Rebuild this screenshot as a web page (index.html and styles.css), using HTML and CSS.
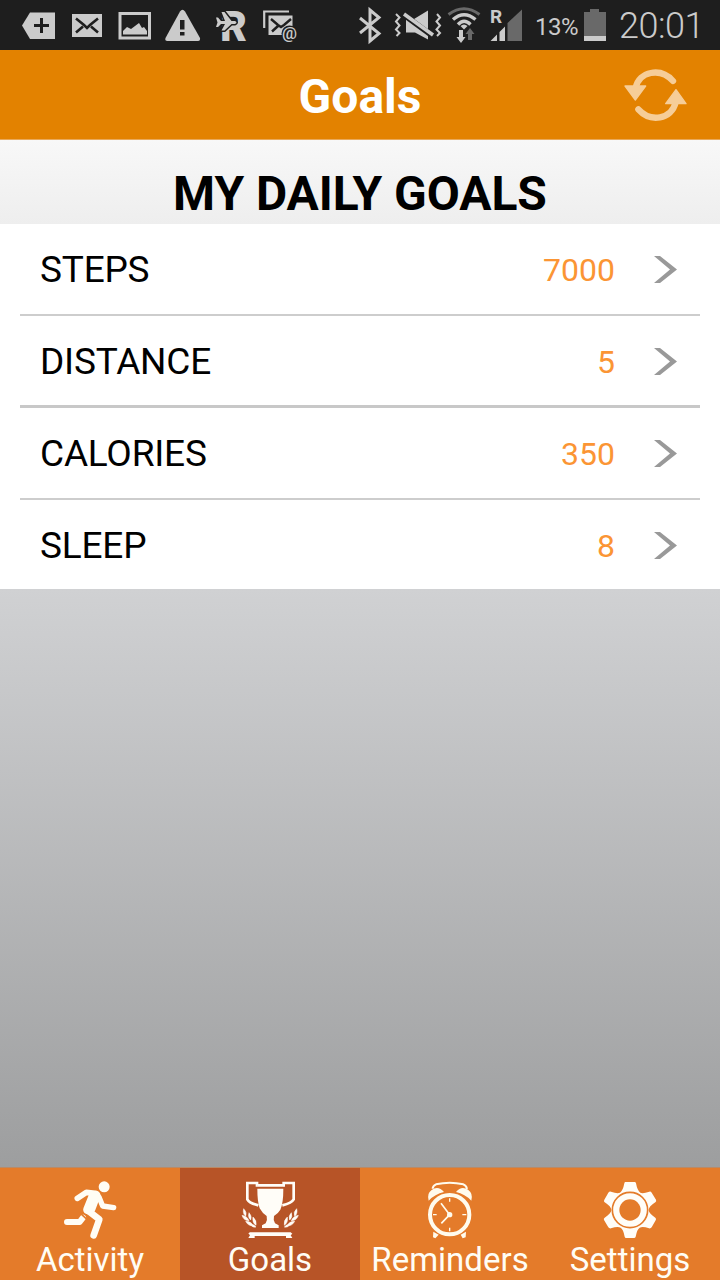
FILE: index.html
```html
<!DOCTYPE html>
<html lang="en">
<head>
<meta charset="utf-8">
<title>Goals</title>
<link rel="stylesheet" href="styles.css">
</head>
<body>
<div class="app">
  <div class="status">
    <svg class="notices" width="290" height="50" viewBox="15 0 290 50">
      <g fill="#cbcbcb">
        <path d="M22 25.500 30 12.500H55V39H30Z"/>
        <path d="M72 14h30v23H72Z"/>
        <path d="M118.500 12H151v27.500H118.500ZM121.500 15v21.500H148V15Z" fill-rule="evenodd"/>
        <path d="M123 34.500V31l4-4 4 2 8-6 3 5 2-1 3 4v3.500Z"/>
        <path d="M180 11.500Q182.500 8 185 11.500L200 38Q200.500 41 198 41H167.500Q164.500 41 165.500 38Z"/>
      </g>
      <path d="M41.500 18v15M34 25.500h15" stroke="#1e1e1e" stroke-width="3" fill="none"/>
      <path d="M76 18.500 84 25l3 3 3-3 8-6.500M76 32.500l7-6M98 32.500l-7-6" stroke="#1e1e1e" stroke-width="2.600" fill="none"/>
      <path d="M180 20h4.500v9.500H180ZM180 32h4.500v3.500H180Z" fill="#1e1e1e"/>
      <text class="roam-letter" x="220" y="41" textLength="27" lengthAdjust="spacingAndGlyphs">R</text>
      <path class="plane" d="M216 17.500h2l3 3.500h4l-3.500-9h3l7 9h3.500q3 1.500 0 3h-3.500l-7 6.500h-3l3.500-6.500h-4l-3 3h-2l1.500-4.500Z"/>
      <path d="M264.200 28V11.500H289" stroke="#cbcbcb" stroke-width="2.200" fill="none"/>
      <path d="M268.500 15.500H292.500V27L284 35H268.500Z" fill="#cbcbcb"/>
      <path d="M271 19l7 6 3 2 3-2 7-6M272 31.500l6-5.500" stroke="#1e1e1e" stroke-width="2.400" fill="none"/>
      <circle cx="289.500" cy="33.500" r="8" fill="#1e1e1e"/>
      <text class="at-letter" x="282" y="38.500" textLength="15" lengthAdjust="spacingAndGlyphs">@</text>
    </svg>
    <svg class="signals" width="172" height="50" viewBox="355 0 172 50">
      <path d="M360 18l19 15.500-9 7.500V10l9 7.500L360 33" stroke="#cbcbcb" stroke-width="3" fill="none"/>
      <path d="M396 14l3.500 3.500-3.500 4 3.500 4-3.500 4 3.500 3.500-3 3M437 14l3 3.500-3.500 4 3.500 4-3.500 4 3.500 3.500-3 3" stroke="#cbcbcb" stroke-width="2" fill="none"/>
      <path d="M406 19h8l14-8.500V39.500l-13-7h-9Z" fill="#cbcbcb"/>
      <path d="M402 13.500 434 37" stroke="#1e1e1e" stroke-width="5.500"/>
      <path d="M404 14 433 35" stroke="#cbcbcb" stroke-width="3.600"/>
      <g fill="none" stroke-width="3">
        <path d="M448.500 14.500Q464 3 479.500 14.500" stroke="#696969"/>
        <path d="M453 19.500Q464 10 475.500 19.500M458 24.500Q464 18 470.500 24.500" stroke="#cbcbcb" stroke-width="3.400"/>
      </g>
      <path d="M460.500 26q3.500-3 7 0L464 29.500Z" fill="#cbcbcb"/>
      <path d="M459 30h4v7h2.500L461 43l-4.500-6h2.500Z" fill="#cbcbcb"/>
      <path d="M468 40v-6h-2.500L470 28l4.500 6H472v6Z" fill="#696969"/>
      <path d="M507.500 41V23L522 9.500V41Z" fill="#696969"/>
      <path d="M490.500 41 497 34.500V41ZM499.500 41v-9l5.500-5.500V41Z" fill="#cbcbcb"/>
      <text class="signal-letter" x="490" y="23">R</text>
    </svg>
    <span class="percent">13%</span>
    <svg class="battery" width="22" height="32" viewBox="0 0 22 32">
      <path d="M0 3H6V0H15V3H22V27H0Z" fill="#696969"/><path d="M0 27H22V32H0Z" fill="#cbcbcb"/>
    </svg>
    <span class="clock">20:01</span>
  </div>

  <div class="header">
    <h1 class="title">Goals</h1>
    <svg class="refresh" width="64" height="54" viewBox="1033 53 192 162">
      <g stroke="#f6cd98" stroke-width="19" stroke-linecap="round" fill="none">
        <path d="M1068 113C1078 63 1142 50 1180 92"/>
        <path d="M1188 156C1176 208 1112 217 1076 177"/>
      </g>
      <g fill="#f6cd98" stroke="#f6cd98" stroke-width="4" stroke-linejoin="round">
        <path d="M1036 107H1098L1067 149Z"/><path d="M1158 160H1219L1189 118Z"/>
      </g>
    </svg>
  </div>

  <h2 class="heading">MY DAILY GOALS</h2>

  <div class="goals">
    <div class="goal"><span class="name">STEPS</span><span class="value">7000</span><svg class="chevron" width="24" height="28" viewBox="0 0 24 28"><path d="M0 0H6L23 13.500 6 27H0L16 13.500Z" fill="#999"/></svg></div>
    <div class="goal thick"><span class="name">DISTANCE</span><span class="value">5</span><svg class="chevron" width="24" height="28" viewBox="0 0 24 28"><path d="M0 0H6L23 13.500 6 27H0L16 13.500Z" fill="#999"/></svg></div>
    <div class="goal"><span class="name">CALORIES</span><span class="value">350</span><svg class="chevron" width="24" height="28" viewBox="0 0 24 28"><path d="M0 0H6L23 13.500 6 27H0L16 13.500Z" fill="#999"/></svg></div>
    <div class="goal"><span class="name">SLEEP</span><span class="value">8</span><svg class="chevron" width="24" height="28" viewBox="0 0 24 28"><path d="M0 0H6L23 13.500 6 27H0L16 13.500Z" fill="#999"/></svg></div>
  </div>

  <div class="filler"></div>

  <div class="tabs">
    <div class="tab">
      <svg width="60" height="60" viewBox="180 60 180 180">
        <circle cx="312.500" cy="80.500" r="16.500" fill="#fffdf5"/>
        <g fill="none" stroke="#fffdf5" stroke-linecap="round" stroke-linejoin="round">
          <path d="M232 115 259 97 285 100" stroke-width="17"/>
          <path d="M297 111 308 138 341 143" stroke-width="16"/>
          <path d="M279 109 263 149" stroke-width="27"/>
          <path d="M288 106 273 146" stroke-width="27"/>
          <path d="M263 151 298 178 281 226" stroke-width="20"/>
          <path d="M201 186H239L249 173" stroke-width="18"/>
        </g>
        <path d="M239 158 261 178" stroke="#e47b2a" stroke-width="5"/>
      </svg>
      <span>Activity</span>
    </div>
    <div class="tab active">
      <svg width="60" height="60" viewBox="186 60 180 180">
        <g fill="#fffdf8">
          <path d="M238 72H316V80H238ZM238 86H316Q316 130 307 149Q300 161 288 168Q285 180 291 190L302 196V204H252V196L263 190Q269 180 266 168Q253 160 245 145Q238 124 238 86Z"/>
          <path d="M216 217H338L343 221 338 226 343 234H324V228H230V234H211L216 226 211 220Z"/>
        </g>
        <g fill="none" stroke="#fffdf8" stroke-width="8">
          <path d="M239 76H237V69H208V118Q213 129 241 136M315 76H317V69H347V118Q341 129 313 136"/>
        </g>
        <g fill="#fffdf8" stroke="#fffdf8" stroke-width="1.500" id="laurel">
          <path d="M197 146Q208 156 203 169Q193 161 197 146ZM192 166Q209 169 213 183Q196 181 192 166ZM213 158Q223 168 218 180Q208 172 213 158ZM203 184Q219 184 226 197Q211 199 203 184ZM225 171Q237 181 234 196Q222 188 225 171ZM218 195Q226 191 234 201Q225 204 218 195Z"/>
        </g>
        <use href="#laurel" transform="matrix(-1 0 0 1 553 0)"/>
      </svg>
      <span>Goals</span>
    </div>
    <div class="tab">
      <svg width="60" height="60" viewBox="186 60 180 180">
        <g fill="none" stroke="#fffbed">
          <circle cx="275" cy="164" r="59" stroke-width="12"/>
          <path d="M224 86Q224 78 234 73Q275 63 316 73Q328 79 326 88" stroke-width="6"/>
          <path d="M275 164 249 130M275 164 250 190" stroke-width="5"/>
          <path d="M275 115V125M275 203V214M225 164H236M313 164H325" stroke-width="4"/>
        </g>
        <g fill="#fffbed">
          <circle cx="275" cy="164" r="8"/>
          <path d="M212 122Q206 101 220 91Q240 75 258 96Q231 102 212 122ZM340 122Q346 101 331 90Q311 75 294 96Q321 102 340 122ZM226 215 242 224 232 235 225 232ZM324 215 308 224 314 235 323 232Z"/>
        </g>
      </svg>
      <span>Reminders</span>
    </div>
    <div class="tab">
      <svg width="60" height="60" viewBox="186 60 180 180">
        <path d="M262 66H290Q293 66 294 70Q298 92 307 98Q314 102 334 95Q339 94 341 98L354 119Q356 124 352 127Q332 140 332 150Q332 160 352 173Q356 176 353 181L341 202Q338 206 333 205Q314 198 305 203Q297 208 293 230Q292 234 288 234H264Q261 234 260 230Q256 208 248 203Q239 198 219 205Q214 206 211 202L198 180Q196 175 200 173Q220 160 220 150Q220 140 200 127Q196 124 199 119L211 98Q214 94 219 95Q238 102 246 98Q255 92 259 70Q260 66 262 66Z" fill="#fffdf8"/>
        <circle cx="276" cy="150" r="53" fill="none" stroke="#e47b2a" stroke-width="5"/>
        <circle cx="276" cy="150" r="32" fill="#e47b2a"/>
      </svg>
      <span>Settings</span>
    </div>
  </div>
</div>
</body>
</html>
```
FILE: styles.css
```css
* { box-sizing: border-box; }
body { margin: 0; font-family: Roboto, sans-serif; }
svg { display: block; flex: none; }
.app { width: 720px; height: 1280px; display: flex; flex-direction: column; overflow: hidden; }

.status { height: 50px; background: #1e1e1e; color: #cbcbcb; display: flex; align-items: flex-start; padding-left: 15px; }
.signals { margin-left: 50px; }
.percent { margin-left: 8px; width: 49px; font-size: 24px; line-height: 30px; padding-top: 12px; letter-spacing: -0.5px; }
.battery { margin-top: 9px; }
.clock { margin-left: 13px; font-size: 36px; font-weight: 300; line-height: 42px; padding-top: 5px; white-space: nowrap; letter-spacing: -0.5px; }
.roam-letter { font: 900 42px Roboto, sans-serif; fill: #cbcbcb; }
.plane { fill: #cbcbcb; stroke: #1e1e1e; stroke-width: 3px; paint-order: stroke; }
.at-letter { font: 500 17px Roboto, sans-serif; fill: #cbcbcb; }
.signal-letter { font: 700 19px Roboto, sans-serif; fill: #cbcbcb; }

.header { height: 90px; background: #e38200; display: grid; grid-template-columns: 94px 1fr 94px; align-items: center; border-bottom: 1px solid #e9a95a; }
.title { grid-column: 2; margin: 0; padding-top: 5px; text-align: center; color: #fff; font-size: 48px; line-height: 56px; font-weight: 700; }
.refresh { margin-left: -2px; }

.heading { margin: 0; height: 84px; padding-top: 26px; background: linear-gradient(#f8f8f8, #eee); text-align: center; font-size: 48px; line-height: 56px; font-weight: 700; color: #000; letter-spacing: -0.05px; }

.goals { height: 365px; background: #fff; padding: 0 20px; display: grid; grid-template-rows: 92px 92px 92px 89px; }
.goal { display: flex; align-items: center; padding: 2px 22px 0 20px; border-bottom: 2px solid #cdcdcd; }
.goal.thick { border-bottom-width: 3px; border-color: #c8c8c8; }
.goal:last-child { border-bottom: 0; }
.name { flex: 1; font-size: 37px; line-height: 42px; color: #000; letter-spacing: -0.2px; }
.value { font-size: 32px; line-height: 38px; color: #fb9534; }
.chevron { margin-left: 39px; }

.filler { flex: 1; background: linear-gradient(#d0d1d3, #9d9e9f); }

.tabs { height: 113px; display: grid; grid-template-columns: 180px 180px 180px 180px; background: #e47b2a; border-top: 1px solid #b98a67; }
.tab { display: flex; flex-direction: column; align-items: center; padding-top: 12px; color: #fffdf5; font-size: 33px; line-height: 40px; }
.tab.active { background: #b75427; }
```
